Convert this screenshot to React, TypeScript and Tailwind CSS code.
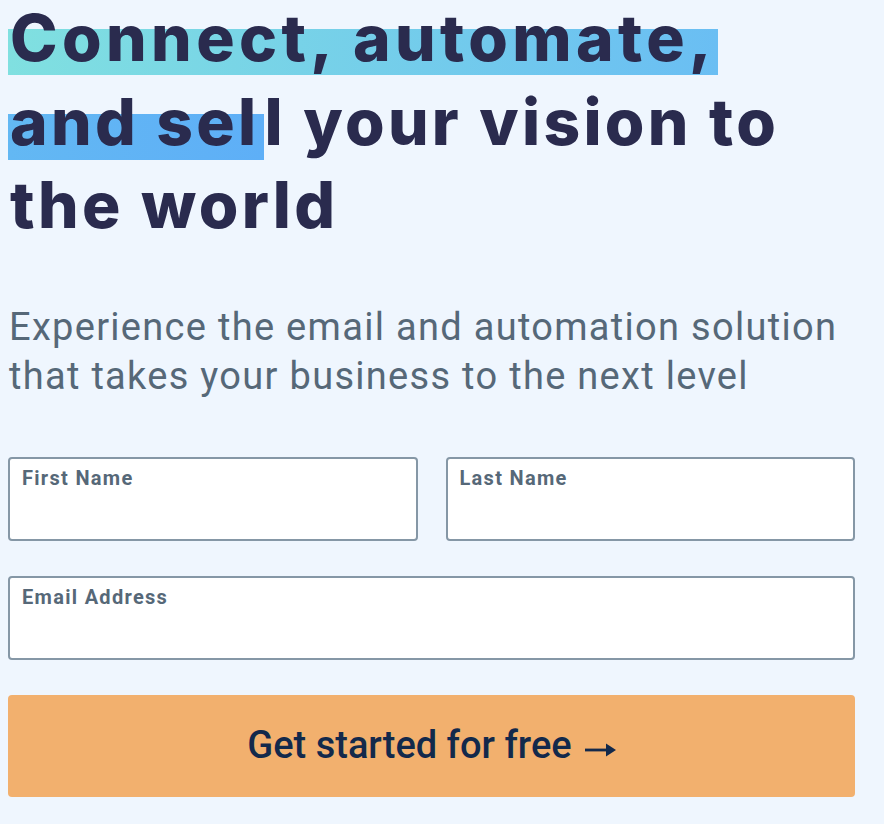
import React from "react";

function Field({ label, className }: { label: string; className?: string }) {
  return (
    <label
      className={
        "flex flex-col h-[84px] bg-white border-2 border-[#8597a6] rounded-[4px] px-[12px] pt-[7px] " +
        (className ?? "")
      }
    >
      <span className="text-[20px] leading-[24px] font-bold tracking-[1.3px] text-[#566878]">{label}</span>
      <input className="flex-1 outline-none bg-transparent text-[20px] text-[#2a2b4e]" />
    </label>
  );
}

function ArrowRight() {
  return (
    <svg width="31" height="14" viewBox="0 0 31 14" className="inline-block ml-[13px] align-[1px]" fill="#13294b">
      <rect x="0" y="5.6" width="24" height="2.8" />
      <path d="M21 0.5 L31 7 L21 13.5 Z" />
    </svg>
  );
}

export default function App() {
  return (
    <div
      className="w-[884px] h-[824px] overflow-hidden bg-[#eff6fe] pl-[8px] pr-[29px]"
      style={{ fontFamily: "Roboto, 'Liberation Sans', sans-serif" }}
    >
      <h1
        className="text-[64px] font-extrabold text-[#2a2b4e] tracking-[3.3px] pl-[2px]"
        style={{ fontFamily: "Inter, 'Noto Sans', sans-serif" }}
      >
        <span className="block leading-[76px] pb-[3.5px] tracking-[4.4px]">
          <span className="bg-[linear-gradient(90deg,#80e0e0,#6abef3)] bg-no-repeat bg-[length:100%_46px] bg-[position:0_30px] -ml-[2px] pl-[2px] pr-[2px]">
            Connect, automate,
          </span>
        </span>
        <span className="block leading-[83.5px]">
          <span className="bg-[linear-gradient(90deg,#63b8f3,#5eaff7)] bg-no-repeat bg-[length:100%_46px] bg-[position:0_31px] -ml-[2px] pl-[2px] pr-[5px]">
            and sel
          </span>
          l your vision to
        </span>
        <span className="block leading-[83.5px]">the world</span>
      </h1>

      <p className="mt-[56px] text-[38px] leading-[49px] tracking-[1.3px] text-[#566878] pl-[1px]">
        Experience the email and automation solution that takes your business to the next level
      </p>

      <form className="mt-[56px] flex flex-col gap-[35px]">
        <div className="flex gap-[28px]">
          <Field label="First Name" className="flex-1" />
          <Field label="Last Name" className="flex-1" />
        </div>
        <Field label="Email Address" />
        <button
          type="button"
          className="h-[102px] rounded-[4px] bg-[#f2b06e] text-[#13294b] text-[38px] font-medium"
        >
          Get started for free
          <ArrowRight />
        </button>
      </form>
    </div>
  );
}
